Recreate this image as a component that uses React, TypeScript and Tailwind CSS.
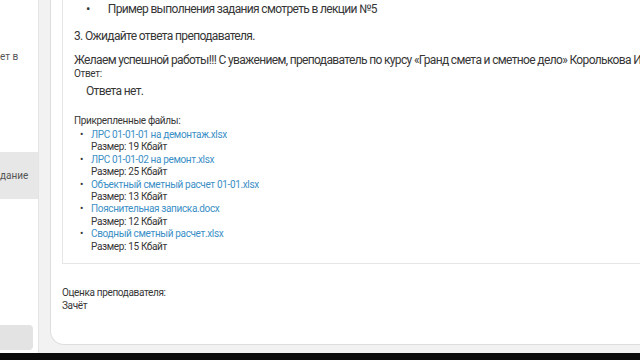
import React from "react";

const files = [
  { name: "ЛРС 01-01-01 на демонтаж.xlsx", size: "19 Кбайт" },
  { name: "ЛРС 01-01-02 на ремонт.xlsx", size: "25 Кбайт" },
  { name: "Объектный сметный расчет 01-01.xlsx", size: "13 Кбайт" },
  { name: "Пояснительная записка.docx", size: "12 Кбайт" },
  { name: "Сводный сметный расчет.xlsx", size: "15 Кбайт" },
];

function Sidebar() {
  return (
    <div className="relative w-[39px] shrink-0 overflow-hidden border-r border-[#e4e4e4] bg-white text-[10px] text-[#555]">
      <div className="absolute left-0 top-[49px] whitespace-nowrap">ет в</div>
      <div className="absolute left-0 top-[152px] flex h-[47px] w-[39px] items-center bg-[#e7e7e7] whitespace-nowrap">
        дание
      </div>
      <div className="absolute left-0 top-[325px] h-[25px] w-[33px] rounded-r-[4px] bg-[#e3e3e3]" />
    </div>
  );
}

export default function App() {
  return (
    <div
      className="flex h-[360px] w-[640px] flex-col overflow-hidden bg-[#f2f2f2] text-[#363636]"
      style={{ fontFamily: "Roboto, 'Open Sans', sans-serif" }}
    >
      <div className="flex min-h-0 flex-1">
        <Sidebar />
        <div className="ml-[11px] mb-[8px] min-w-0 flex-1 overflow-hidden rounded-bl-[14px] border-b border-l border-[#dedede] bg-white pl-[11px]">
          <div className="border-b border-l border-[#e6e6e6] pl-[11px] pb-[10px]">
            <div className="flex items-center pl-[12px] pt-[1px] text-[12px] leading-[16px] tracking-[-0.65px] whitespace-nowrap">
              <span className="mr-[18px] text-[13px]">•</span>
              Пример выполнения задания смотреть в лекции №5
            </div>
            <p className="mt-[11px] text-[12px] leading-[16px] tracking-[-0.65px] whitespace-nowrap">
              3. Ожидайте ответа преподавателя.
            </p>
            <p className="mt-[8px] text-[12px] leading-[16px] tracking-[-0.65px] whitespace-nowrap">
              Желаем успешной работы!!! С уважением, преподаватель по курсу «Гранд смета и сметное дело» Королькова Ирина
            </p>
            <div className="text-[10px] leading-[12px] tracking-[-0.35px]">Ответ:</div>
            <p className="mt-[3px] pl-[12px] text-[12px] leading-[16px] tracking-[-0.65px]">Ответа нет.</p>
            <div className="mt-[16px] text-[10px] leading-[12px] tracking-[-0.35px]">Прикрепленные файлы:</div>
            <ul className="mt-[2px] text-[10px] leading-[12.4px] tracking-[-0.35px]">
              {files.map((f) => (
                <li key={f.name} className="flex">
                  <span className="w-[17px] pl-[6px] text-[10px]">•</span>
                  <div>
                    <a className="text-[#3b8fc6]">{f.name}</a>
                    <div>Размер: {f.size}</div>
                  </div>
                </li>
              ))}
            </ul>
          </div>
          <div className="mt-[22px] text-[10px] leading-[13px] tracking-[-0.35px]">
            <div>Оценка преподавателя:</div>
            <div>Зачёт</div>
          </div>
        </div>
      </div>
      <div className="h-[7px] shrink-0 bg-[#0b0b0b]" />
    </div>
  );
}
